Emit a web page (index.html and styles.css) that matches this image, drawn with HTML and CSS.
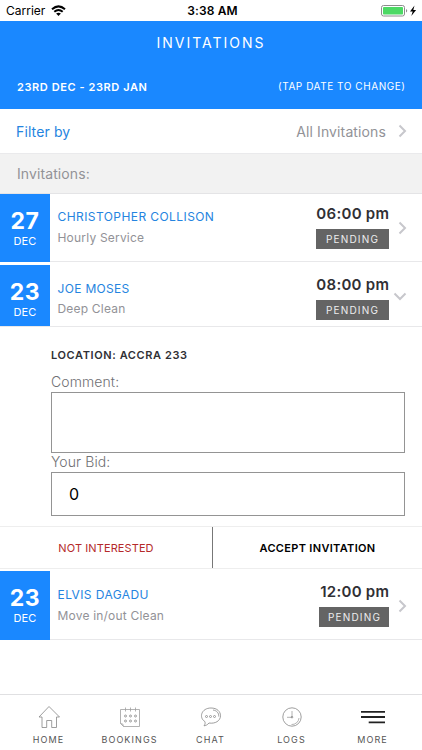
FILE: index.html
```html
<!DOCTYPE html>
<html lang="en">
<head>
<meta charset="utf-8">
<title>Invitations</title>
<link rel="stylesheet" href="styles.css">
</head>
<body>
<div class="app">
  <div class="status">
    <div class="carrier"><span>Carrier</span>
      <svg width="15" height="12" viewBox="0 0 15 12"><path d="M1 4.3Q7.5-1.5 14 4.3M3.3 6.8Q7.500 3.200 11.700 6.800" fill="none" stroke="#000" stroke-width="2"/><path d="M5.100 8.600Q7.500 6.700 9.900 8.600L7.500 11z"/></svg>
    </div>
    <div class="clock">3:38 AM</div>
    <div class="power">
      <svg width="36" height="12" viewBox="0 0 36 12"><rect x=".5" y=".5" width="23" height="10.500" rx="2" fill="#fff" stroke="#8c8c8c"/><rect x="2" y="2" width="20" height="7.500" rx=".8" fill="#4cd964"/><path d="M25 4v3.500q1.200-.4 1.200-1.750T25 4z" fill="#8c8c8c"/><path d="M33.500.5L29 6.500h2.700L30.300 11l4.800-6h-2.800z"/></svg>
    </div>
  </div>
  <header class="header">
    <h1 class="title">INVITATIONS</h1>
    <div class="range"><b class="dates">23RD DEC - 23RD JAN</b><span class="hint">(TAP DATE TO CHANGE)</span></div>
  </header>
  <div class="filter">
    <span class="filter-label">Filter by</span><span class="filter-value">All Invitations</span>
    <svg class="chevron" width="9" height="14" viewBox="0 0 9 14"><path d="M1.500 1.500L7 7l-5.500 5.500"/></svg>
  </div>
  <div class="section"><span>Invitations:</span></div>

  <div class="row first">
    <div class="date"><b>27</b><span>DEC</span></div>
    <div class="who"><span class="name">CHRISTOPHER COLLISON</span><span class="service">Hourly Service</span></div>
    <div class="when"><span class="time">06:00 pm</span><span class="badge">PENDING</span></div>
    <svg class="chevron" width="9" height="14" viewBox="0 0 9 14"><path d="M1.500 1.500L7 7l-5.500 5.500"/></svg>
  </div>
  <div class="row second">
    <div class="date"><b>23</b><span>DEC</span></div>
    <div class="who"><span class="name">JOE MOSES</span><span class="service">Deep Clean</span></div>
    <div class="when"><span class="time">08:00 pm</span><span class="badge">PENDING</span></div>
    <svg class="chevron down" width="14" height="9" viewBox="0 0 14 9"><path d="M1.500 1.500L7 7l5.500-5.500"/></svg>
  </div>
  <div class="details">
    <div class="location">LOCATION: ACCRA 233</div>
    <div class="label comment-label">Comment:</div>
    <div class="field comment"></div>
    <div class="label bid-label">Your Bid:</div>
    <div class="field bid">0</div>
  </div>
  <div class="actions"><div class="decline"><span>NOT INTERESTED</span></div><div class="accept"><span>ACCEPT INVITATION</span></div></div>
  <div class="row third">
    <div class="date"><b>23</b><span>DEC</span></div>
    <div class="who"><span class="name">ELVIS DAGADU</span><span class="service">Move in/out Clean</span></div>
    <div class="when"><span class="time">12:00 pm</span><span class="badge narrow">PENDING</span></div>
    <svg class="chevron" width="9" height="14" viewBox="0 0 9 14"><path d="M1.500 1.500L7 7l-5.500 5.500"/></svg>
  </div>

  <nav class="tabs">
    <div class="tab"><svg width="24" height="24" viewBox="0 0 24 24"><path d="M2 12L12 1.500 22.500 12H19.500V22.500H14.700V15.500H9.700V22.500H5V12z"/></svg><span>HOME</span></div>
    <div class="tab"><svg width="24" height="24" viewBox="0 0 24 24"><path class="light" d="M2.500 4.500h19v17h-16l-3-3zM2.500 18.500q3-.5 3 3M7.500 2.500v4M12.500 2.500v4M17.500 2.500v4"/><circle cx="7.500" cy="11" r="1"/><circle cx="12.500" cy="11" r="1"/><circle cx="17.500" cy="11" r="1"/><circle cx="7.500" cy="16" r="1"/><circle cx="12.500" cy="16" r="1"/><circle cx="17.500" cy="16" r="1"/></svg><span>BOOKINGS</span></div>
    <div class="tab"><svg width="24" height="24" viewBox="0 0 24 24"><path d="M5.800 16.500C-.5 12.500 2.500 3 12 3c6 0 9.500 3.500 9.500 7.700 0 5.300-5.500 8.300-11.500 7.300-1.500 1.800-3.300 2.700-5 2.800 1.200-1.300 1.400-2.700.8-4.300zM14 5c4 .6 6 3.200 5.700 6.500"/><circle cx="7.500" cy="11.500" r="1"/><circle cx="11.500" cy="11.500" r="1"/><circle cx="15.500" cy="11.500" r="1"/></svg><span>CHAT</span></div>
    <div class="tab"><svg width="24" height="24" viewBox="0 0 24 24"><circle cx="12" cy="12" r="9.200"/><path class="light" d="M12 6v6.300H7M19 13a7 7 0 0 1-7.500 6.500"/><circle cx="12" cy="12.200" r=".8"/></svg><span>LOGS</span></div>
    <div class="tab"><svg class="menu" width="24" height="24" viewBox="0 0 24 24"><path d="M0 6.800h24M0 12h24M7.700 17.300H24"/></svg><span>MORE</span></div>
  </nav>
</div>
</body>
</html>
```
FILE: styles.css
```css
* { box-sizing: border-box; }
body { margin: 0; background: #fff; font-family: Inter, "Liberation Sans", sans-serif; }
.app { width: 422px; height: 750px; display: flex; flex-direction: column; overflow: hidden; white-space: nowrap; }
svg { display: block; flex: none; }

.status { height: 21px; flex: none; display: grid; grid-template-columns: 1fr auto 1fr; align-items: center; padding: 1px 5px 0 6px; font-size: 12px; line-height: 20px; }
.carrier { display: flex; align-items: center; gap: 6px; }
.clock { font-weight: 600; letter-spacing: .1px; padding-left: 2px; }
.power { justify-self: end; }

.header { height: 88px; flex: none; background: #1a88ff; color: #fff; padding: 13px 17px 0; }
.title { margin: 0; font-size: 14px; line-height: 18px; font-weight: 400; letter-spacing: 2px; text-align: center; }
.range { display: flex; justify-content: space-between; align-items: center; margin-top: 27px; line-height: 16px; }
.dates { font-size: 11px; font-weight: 600; letter-spacing: .58px; }
.hint { font-size: 10px; letter-spacing: .55px; margin-right: -.5px; margin-top: -2px; }

.filter { height: 44px; flex: none; display: flex; align-items: center; padding: 0 15px 0 16px; font-size: 14px; letter-spacing: .12px; }
.filter-label { color: #2584e0; }
.filter-value { margin-left: auto; margin-right: 12px; color: #929297; }
.chevron { fill: none; stroke: #c7c7cc; stroke-width: 2; }
.section { height: 41px; flex: none; display: flex; align-items: center; padding-left: 17px; background: #f2f2f2; border-top: 1px solid #eaeaec; border-bottom: 1px solid #e4e4e6; font-size: 14px; color: #929297; letter-spacing: .1px; }

.row { flex: none; display: flex; border-bottom: 1px solid #e8e8ea; padding-right: 15px; }
.first { height: 68px; }
.second { height: 62px; margin-top: 3px; }
.third { height: 69px; margin-top: 2px; }
.date { width: 50px; margin-bottom: -1px; background: #1a88ff; color: #fff; display: flex; flex-direction: column; align-items: center; padding-top: 15px; }
.second .date { margin-bottom: 0; }
.date b { font-size: 23px; line-height: 24px; font-weight: 700; letter-spacing: .5px; }
.date span { font-size: 11px; line-height: 16px; letter-spacing: .2px; }
.who { display: flex; flex-direction: column; margin-left: 7.500px; padding-top: 14px; }
.third .who { padding-top: 15px; }
.name { font-size: 12px; line-height: 18px; color: #2584e0; letter-spacing: .42px; }
.second .name { letter-spacing: .32px; padding-top: 1px; margin-bottom: -1px; }
.service { font-size: 12px; line-height: 18px; margin-top: 3px; color: #929297; letter-spacing: .2px; }
.when { margin-left: auto; display: flex; flex-direction: column; align-items: flex-end; padding-top: 10px; }
.third .when { padding-top: 11px; }
.time { font-size: 15px; line-height: 20px; font-weight: 600; color: #303035; letter-spacing: .28px; margin-right: -.3px; }
.badge { width: 73px; height: 20px; margin-top: 5px; background: #646464; color: #eee; font-size: 10px; line-height: 20px; letter-spacing: 1.2px; text-align: center; }
.narrow { width: 70px; padding-left: 1px; }
.row .chevron { margin: 27px 0 0 9px; }
.third .chevron { margin-top: 28px; }
.row .down { margin: 27px 0 0 4px; }

.details { height: 199px; flex: none; padding: 19px 17px 0 51px; }
.location { font-size: 11px; line-height: 18px; font-weight: 600; color: #303035; letter-spacing: .6px; }
.label { font-size: 14px; line-height: 20px; font-weight: 300; color: #707074; letter-spacing: .1px; }
.comment-label { margin-top: 8px; }
.bid-label { line-height: 18px; padding-bottom: 1px; }
.field { border: 1px solid #949494; }
.comment { height: 61px; }
.bid { height: 44px; padding-left: 17px; font-size: 16px; line-height: 43px; color: #000; }

.actions { height: 43px; flex: none; display: flex; border-top: 1px solid #eee; border-bottom: 1px solid #eee; font-size: 11px; }
.decline { width: 213px; border-right: 1px solid #777; display: flex; align-items: center; justify-content: center; color: #b52a2a; letter-spacing: .1px; }
.accept { flex: 1; display: flex; align-items: center; justify-content: center; font-weight: 600; color: #000; letter-spacing: .32px; }

.tabs { flex: none; margin-top: auto; height: 56px; border-top: 1px solid #e0e0e2; display: grid; grid-template-columns: repeat(5, 81px); padding-left: 8px; }
.tab { display: flex; flex-direction: column; align-items: center; padding-top: 10px; font-size: 9px; line-height: 12px; color: #555; letter-spacing: 1.1px; }
.tab svg { fill: none; stroke: #858585; stroke-width: .8; }
.tab .light { stroke: #a0a0a0; }
.tab span { margin-top: 5px; }
.tab .menu { stroke: #222; stroke-width: 1.800; }
```
